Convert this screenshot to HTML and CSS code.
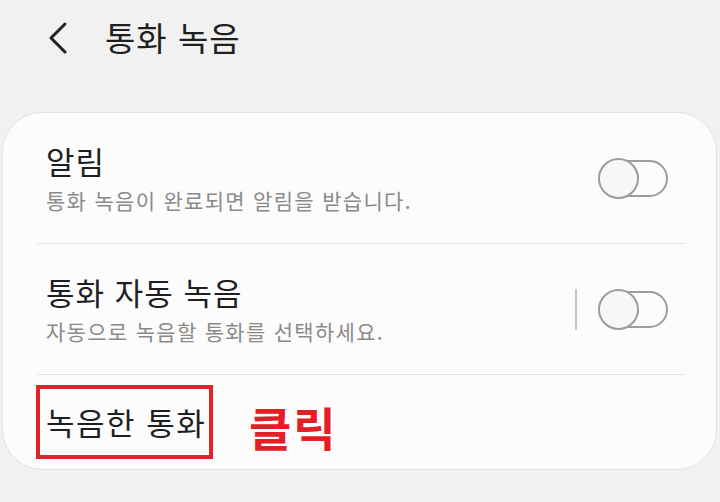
FILE: index.html
```html
<!DOCTYPE html>
<html lang="ko">
<head>
<meta charset="utf-8">
<link rel="stylesheet" href="styles.css">
</head>
<body>
  <header class="topbar">
    <svg class="back" width="22" height="34" viewBox="0 0 22 34" aria-hidden="true">
      <path d="M18 3 L4 17 L18 31" fill="none" stroke="#222" stroke-width="3" stroke-linecap="round" stroke-linejoin="round"/>
    </svg>
    <h1 class="title">통화 녹음</h1>
  </header>

  <main class="card">
    <div class="row">
      <div class="text">
        <div class="row-title">알림</div>
        <div class="row-sub">통화 녹음이 완료되면 알림을 받습니다.</div>
      </div>
      <div class="controls">
        <div class="toggle"><div class="knob"></div></div>
      </div>
    </div>
    <div class="divider"></div>
    <div class="row">
      <div class="text">
        <div class="row-title">통화 자동 녹음</div>
        <div class="row-sub">자동으로 녹음할 통화를 선택하세요.</div>
      </div>
      <div class="controls">
        <div class="vsep"></div>
        <div class="toggle"><div class="knob"></div></div>
      </div>
    </div>
    <div class="divider"></div>
    <div class="row row-last">
      <div class="highlight">녹음한 통화</div>
      <div class="click">클릭</div>
    </div>
  </main>
</body>
</html>
```

FILE: styles.css
```css
* { box-sizing: border-box; }

html, body {
  margin: 0;
  padding: 0;
}

body {
  background: #f1f1f1;
  font-family: "Noto Sans CJK KR", "Noto Sans", sans-serif;
  color: #1f1f1f;
  width: 720px;
  height: 502px;
  overflow: hidden;
}

.topbar {
  height: 76px;
  display: flex;
  align-items: center;
  padding-left: 47px;
}

.back {
  display: block;
  margin-top: -1px;
}

.title {
  margin: -2px 0 0 36px;
  font-size: 33px;
  font-weight: 400;
  line-height: 40px;
  letter-spacing: 1px;
  color: #1f1f1f;
}

.card {
  margin: 36px 3px 0 2px;
  background: #fcfcfc;
  border: 1px solid #e2e2e2;
  border-radius: 40px;
  height: 358px;
  display: flex;
  flex-direction: column;
}

.row {
  height: 130px;
  display: flex;
  align-items: center;
  justify-content: space-between;
  padding: 0 48px 0 43px;
}

.row-title {
  font-size: 31px;
  line-height: 40px;
  letter-spacing: 1px;
  color: #1f1f1f;
}

.row-sub {
  margin-top: 3px;
  font-size: 21px;
  line-height: 32px;
  letter-spacing: 1.3px;
  color: #8a8a8a;
}

.controls {
  display: flex;
  align-items: center;
  gap: 22px;
}

.vsep {
  width: 2px;
  height: 41px;
  background: #c6c6c6;
}

.toggle {
  width: 69px;
  height: 37px;
  border: 2px solid #9c9c9c;
  border-radius: 19px;
  display: flex;
  align-items: center;
}

.knob {
  flex-shrink: 0;
  width: 41px;
  height: 41px;
  margin-left: -3px;
  border: 2px solid #9c9c9c;
  border-radius: 50%;
  background: #f7f7f7;
}

.divider {
  height: 1px;
  background: #e3e3e3;
  margin: 0 31px 0 34px;
}

.row-last {
  height: 94px;
  justify-content: flex-start;
  padding: 0 0 0 33px;
}

.highlight {
  border: 4px solid #e2222b;
  height: 74px;
  width: 177px;
  padding-left: 6px;
  display: flex;
  align-items: center;
  font-size: 31px;
  line-height: 40px;
  letter-spacing: 1.5px;
  white-space: nowrap;
  color: #1f1f1f;
}

.click {
  margin-left: 36px;
  margin-top: 8px;
  font-size: 46px;
  font-weight: 700;
  line-height: 52px;
  letter-spacing: 2px;
  color: #e31e27;
}
```
